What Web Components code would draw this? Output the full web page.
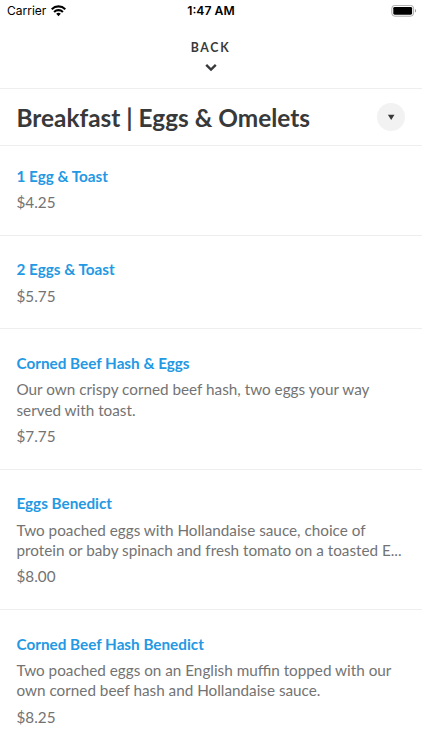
<!DOCTYPE html>
<html lang="en">
<head>
<meta charset="utf-8">
<title>Menu</title>
<style>
    body {
        margin: 0;
        background: #fff;
        font-family: Lato, sans-serif;
        color: #38393a;
        height: 750px;
        overflow: hidden;
    }
</style>
</head>
<body>

<menu-screen>
    <status-bar slot="top" carrier="Carrier" time="1:47 AM"></status-bar>
    <back-button slot="top">BACK</back-button>
    <section-header slot="top">Breakfast | Eggs &amp; Omelets</section-header>

    <menu-item price="$4.25">1 Egg &amp; Toast</menu-item>
    <menu-item price="$5.75">2 Eggs &amp; Toast</menu-item>
    <menu-item price="$7.75">Corned Beef Hash &amp; Eggs
        <span slot="description">Our own crispy corned beef hash, two eggs your way served with toast.</span>
    </menu-item>
    <menu-item price="$8.00">Eggs Benedict
        <span slot="description">Two poached eggs with Hollandaise sauce, choice of protein or baby spinach and fresh tomato on a toasted E...</span>
    </menu-item>
    <menu-item price="$8.25">Corned Beef Hash Benedict
        <span slot="description">Two poached eggs on an English muffin topped with our own corned beef hash and Hollandaise sauce.</span>
    </menu-item>
</menu-screen>

<script>
class MenuScreen extends HTMLElement{

    connectedCallback(){
        const shadow = this.attachShadow({mode:'open'});

        shadow.innerHTML = `<style>
            :host {
                display: block;
                width: 422px;
                height: 750px;
                overflow: hidden;
            }
            main {
                display: flex;
                flex-direction: column;
                margin-top: -4px;
            }
            ::slotted(menu-item:last-child) {
                border-bottom: none;
            }
        </style>
        <slot name="top"></slot>
        <main><slot></slot></main>`;
    }
}

class StatusBar extends HTMLElement{

    connectedCallback(){
        const shadow = this.attachShadow({mode:'open'});

        shadow.innerHTML = `<style>
            :host {
                display: grid;
                grid-template-columns: 1fr auto 1fr;
                align-items: center;
                height: 22px;
                padding: 0 2px 0 7px;
                box-sizing: border-box;
                font: 12px/22px Inter, sans-serif;
                color: #000;
            }
            .left {
                display: flex;
                align-items: center;
                gap: 5px;
            }
            .time {
                font-weight: 600;
                font-size: 12.2px;
                margin-right: 5px;
            }
            .battery {
                justify-self: end;
            }
            svg {
                display: block;
            }
        </style>
        <div class="left">
            <span>${this.getAttribute('carrier')}</span>
            <svg width="15" height="12" viewBox="0 0 15 12">
                <path d="M.7 4.2a9.7 9.7 0 0 1 13.6 0M3.1 6.9a6.3 6.3 0 0 1 8.8 0" fill="none" stroke="#000" stroke-width="2.1"/>
                <path d="M7.5 11.2 5.2 8.8a3.4 3.4 0 0 1 4.6 0z"/>
            </svg>
        </div>
        <span class="time">${this.getAttribute('time')}</span>
        <svg class="battery" width="29" height="12" viewBox="0 0 29 12">
            <rect x=".8" y=".4" width="21.8" height="10.8" rx="3" fill="none" stroke="#aaa"/>
            <rect x="2.3" y="1.9" width="18.8" height="7.8" rx="1.4"/>
            <path d="M24 4.1c1.5.6 1.5 2.9 0 3.5z" fill="#999"/>
        </svg>`;
    }
}

class BackButton extends HTMLElement{

    connectedCallback(){
        const shadow = this.attachShadow({mode:'open'});

        shadow.innerHTML = `<style>
            :host {
                display: flex;
                flex-direction: column;
                align-items: center;
                gap: 7px;
                height: 66px;
                padding: 17px 1px 0 0;
                box-sizing: border-box;
                font-size: 12.3px;
                font-weight: 700;
                line-height: 17px;
                letter-spacing: 1.7px;
            }
        </style>
        <span><slot></slot></span>
        <svg width="12" height="9" viewBox="0 0 12 9">
            <path d="M1.2 1.9 6 6.6l4.8-4.7" fill="none" stroke="#38393a" stroke-width="2.4"/>
        </svg>`;
    }
}

class SectionHeader extends HTMLElement{

    connectedCallback(){
        const shadow = this.attachShadow({mode:'open'});

        shadow.innerHTML = `<style>
            :host {
                display: flex;
                align-items: center;
                justify-content: space-between;
                height: 58px;
                padding: 0 17px 0 16.5px;
                box-sizing: border-box;
                border-top: 1px solid #eee;
                border-bottom: 1px solid #eee;
            }
            h1 {
                margin: 0;
                padding-top: 2px;
                font-size: 24.4px;
                font-weight: 700;
                line-height: 30px;
                white-space: nowrap;
            }
            .toggle {
                display: grid;
                place-items: center;
                width: 28px;
                height: 28px;
                border-radius: 50%;
                background: #f2f2f2;
            }
        </style>
        <h1><slot></slot></h1>
        <span class="toggle">
            <svg width="8" height="6" viewBox="0 0 8 6"><path d="M.9.8h6.6L4.2 6z" fill="#38393a"/></svg>
        </span>`;
    }
}

class MenuItem extends HTMLElement{

    connectedCallback(){
        const shadow = this.attachShadow({mode:'open'});

        shadow.innerHTML = `<style>
            :host {
                display: flex;
                flex-direction: column;
                gap: 6px;
                padding: 23.5px 16.5px 22.3px;
                border-bottom: 1px solid #eee;
                font-size: 15.28px;
                line-height: 20.4px;
                color: #737373;
            }
            .name {
                font-weight: 700;
                color: #2499e3;
            }
            ::slotted([slot=description]) {
                display: block;
            }
        </style>
        <div class="name"><slot></slot></div>
        <slot name="description"></slot>
        <div class="price">${this.getAttribute('price')}</div>`;
    }
}

customElements.define('menu-screen', MenuScreen);
customElements.define('status-bar', StatusBar);
customElements.define('back-button', BackButton);
customElements.define('section-header', SectionHeader);
customElements.define('menu-item', MenuItem);
</script>
</body>
</html>
